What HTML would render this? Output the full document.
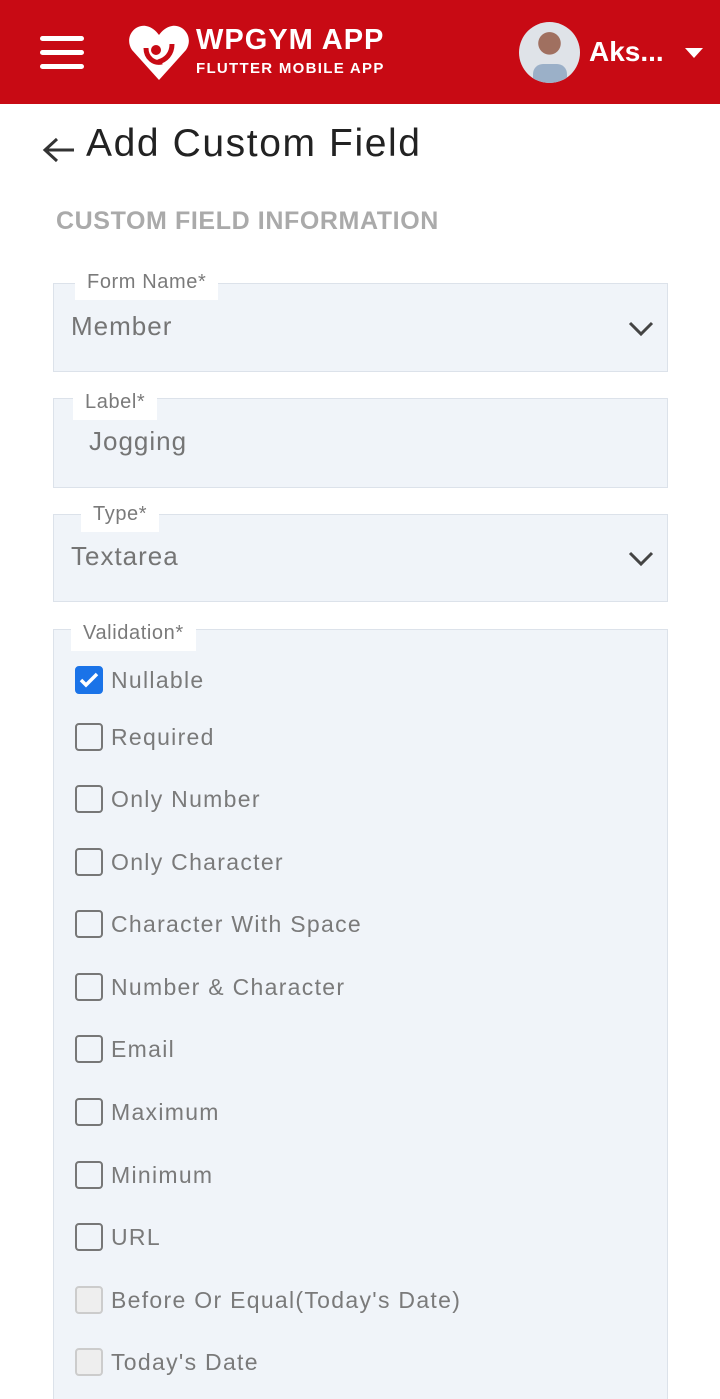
<!DOCTYPE html>
<html><head><meta charset="utf-8"><style>
*{margin:0;padding:0;box-sizing:border-box}
html,body{width:720px;height:1399px;overflow:hidden}
body{background:#fff;font-family:"Liberation Sans",sans-serif;position:relative;color:#777}
.hdr{position:absolute;left:0;top:0;width:720px;height:104px;background:#c80a14}
.bar{position:absolute;left:40px;width:44px;height:5px;background:#fff;border-radius:3px}
.box{position:absolute;left:53px;width:615px;background:#f0f4f9;border:1px solid #dce2ea}
.lbl{position:absolute;background:#fff;color:#7a7a7a;font-size:20px;padding:0 12px;height:32px;line-height:28px;letter-spacing:0.6px}
.val{position:absolute;font-size:26px;color:#757575;letter-spacing:1px}
.row{position:absolute;left:75px;height:28px;font-size:23px;color:#7a7a7a;line-height:28px;letter-spacing:1.3px}
.cb{position:absolute;left:0;top:0;width:28px;height:28px;border:2px solid #777;border-radius:4px}
.row span{position:absolute;left:36px;white-space:nowrap}
.dis .cb{border-color:#ccc;background:#eee}
</style></head><body>
<div class="hdr">
<div class="bar" style="top:36px"></div><div class="bar" style="top:50px"></div><div class="bar" style="top:64px"></div>
<svg style="position:absolute;left:128px;top:22px" width="62" height="60" viewBox="0 0 62 60"><path d="M31 58 L4 28 C-4 16 6 2 18 4 C24 5 28 9 31 13 C34 9 38 5 44 4 C56 2 66 16 58 28 Z" fill="#fff"/><circle cx="28" cy="28" r="5" fill="#c80a14"/><path d="M18 26 C18 36 26 42 34 40 M44 22 C44 32 38 38 30 40" stroke="#c80a14" stroke-width="5" fill="none"/></svg>
<div style="position:absolute;left:196px;top:24px;color:#fff;font-weight:bold;font-size:29px;letter-spacing:1px">WPGYM APP</div>
<div style="position:absolute;left:196px;top:60px;color:#fff;font-weight:bold;font-size:15px;letter-spacing:1.3px">FLUTTER MOBILE APP</div>
<div style="position:absolute;left:519px;top:22px;width:61px;height:61px;border-radius:50%;background:radial-gradient(circle at 50% 35%,#a07060 0 22%,#dfe3e8 23%);overflow:hidden"><div style="position:absolute;left:14px;top:42px;width:34px;height:25px;background:#9bb0c8;border-radius:10px 10px 0 0"></div></div>
<div style="position:absolute;left:589px;top:36px;color:#fff;font-weight:bold;font-size:28px">Aks...</div>
<div style="position:absolute;left:685px;top:48px;width:0;height:0;border-left:9px solid transparent;border-right:9px solid transparent;border-top:10px solid #fff"></div>
</div>
<svg style="position:absolute;left:42px;top:136px" width="34" height="28" viewBox="0 0 34 28"><path d="M32 14H4M15 3L3 14l12 11" stroke="#333" stroke-width="3" fill="none"/></svg>
<div style="position:absolute;left:86px;top:122px;font-size:39px;color:#222;letter-spacing:1.6px">Add Custom Field</div>
<div style="position:absolute;left:56px;top:207px;font-size:25px;color:#aaa;font-weight:bold;letter-spacing:0.6px">CUSTOM FIELD INFORMATION</div>

<div class="box" style="top:283px;height:89px"></div>
<div class="lbl" style="left:75px;top:268px">Form Name*</div>
<div class="val" style="left:71px;top:311px">Member</div>
<svg style="position:absolute;left:628px;top:320px" width="26" height="18" viewBox="0 0 26 18"><path d="M2 3l11 11L24 3" stroke="#444" stroke-width="3" fill="none"/></svg>

<div class="box" style="top:398px;height:90px"></div>
<div class="lbl" style="left:73px;top:388px">Label*</div>
<div class="val" style="left:89px;top:426px">Jogging</div>

<div class="box" style="top:514px;height:88px"></div>
<div class="lbl" style="left:81px;top:500px">Type*</div>
<div class="val" style="left:71px;top:541px">Textarea</div>
<svg style="position:absolute;left:628px;top:550px" width="26" height="18" viewBox="0 0 26 18"><path d="M2 3l11 11L24 3" stroke="#444" stroke-width="3" fill="none"/></svg>

<div class="box" style="top:629px;height:780px"></div>
<div class="lbl" style="left:71px;top:619px">Validation*</div>

<div class="row" style="top:666px"><div class="cb" style="background:#1a73e8;border-color:#1a73e8"><svg width="24" height="24" viewBox="0 0 24 24"><path d="M4 12l5 5L20 6" stroke="#fff" stroke-width="3.5" fill="none"/></svg></div><span>Nullable</span></div>
<div class="row" style="top:723px"><div class="cb"></div><span>Required</span></div>
<div class="row" style="top:785px"><div class="cb"></div><span>Only Number</span></div>
<div class="row" style="top:848px"><div class="cb"></div><span>Only Character</span></div>
<div class="row" style="top:910px"><div class="cb"></div><span>Character With Space</span></div>
<div class="row" style="top:973px"><div class="cb"></div><span>Number &amp; Character</span></div>
<div class="row" style="top:1035px"><div class="cb"></div><span>Email</span></div>
<div class="row" style="top:1098px"><div class="cb"></div><span>Maximum</span></div>
<div class="row" style="top:1161px"><div class="cb"></div><span>Minimum</span></div>
<div class="row" style="top:1223px"><div class="cb"></div><span>URL</span></div>
<div class="row dis" style="top:1286px"><div class="cb"></div><span>Before Or Equal(Today's Date)</span></div>
<div class="row dis" style="top:1348px"><div class="cb"></div><span>Today's Date</span></div>
</body></html>
